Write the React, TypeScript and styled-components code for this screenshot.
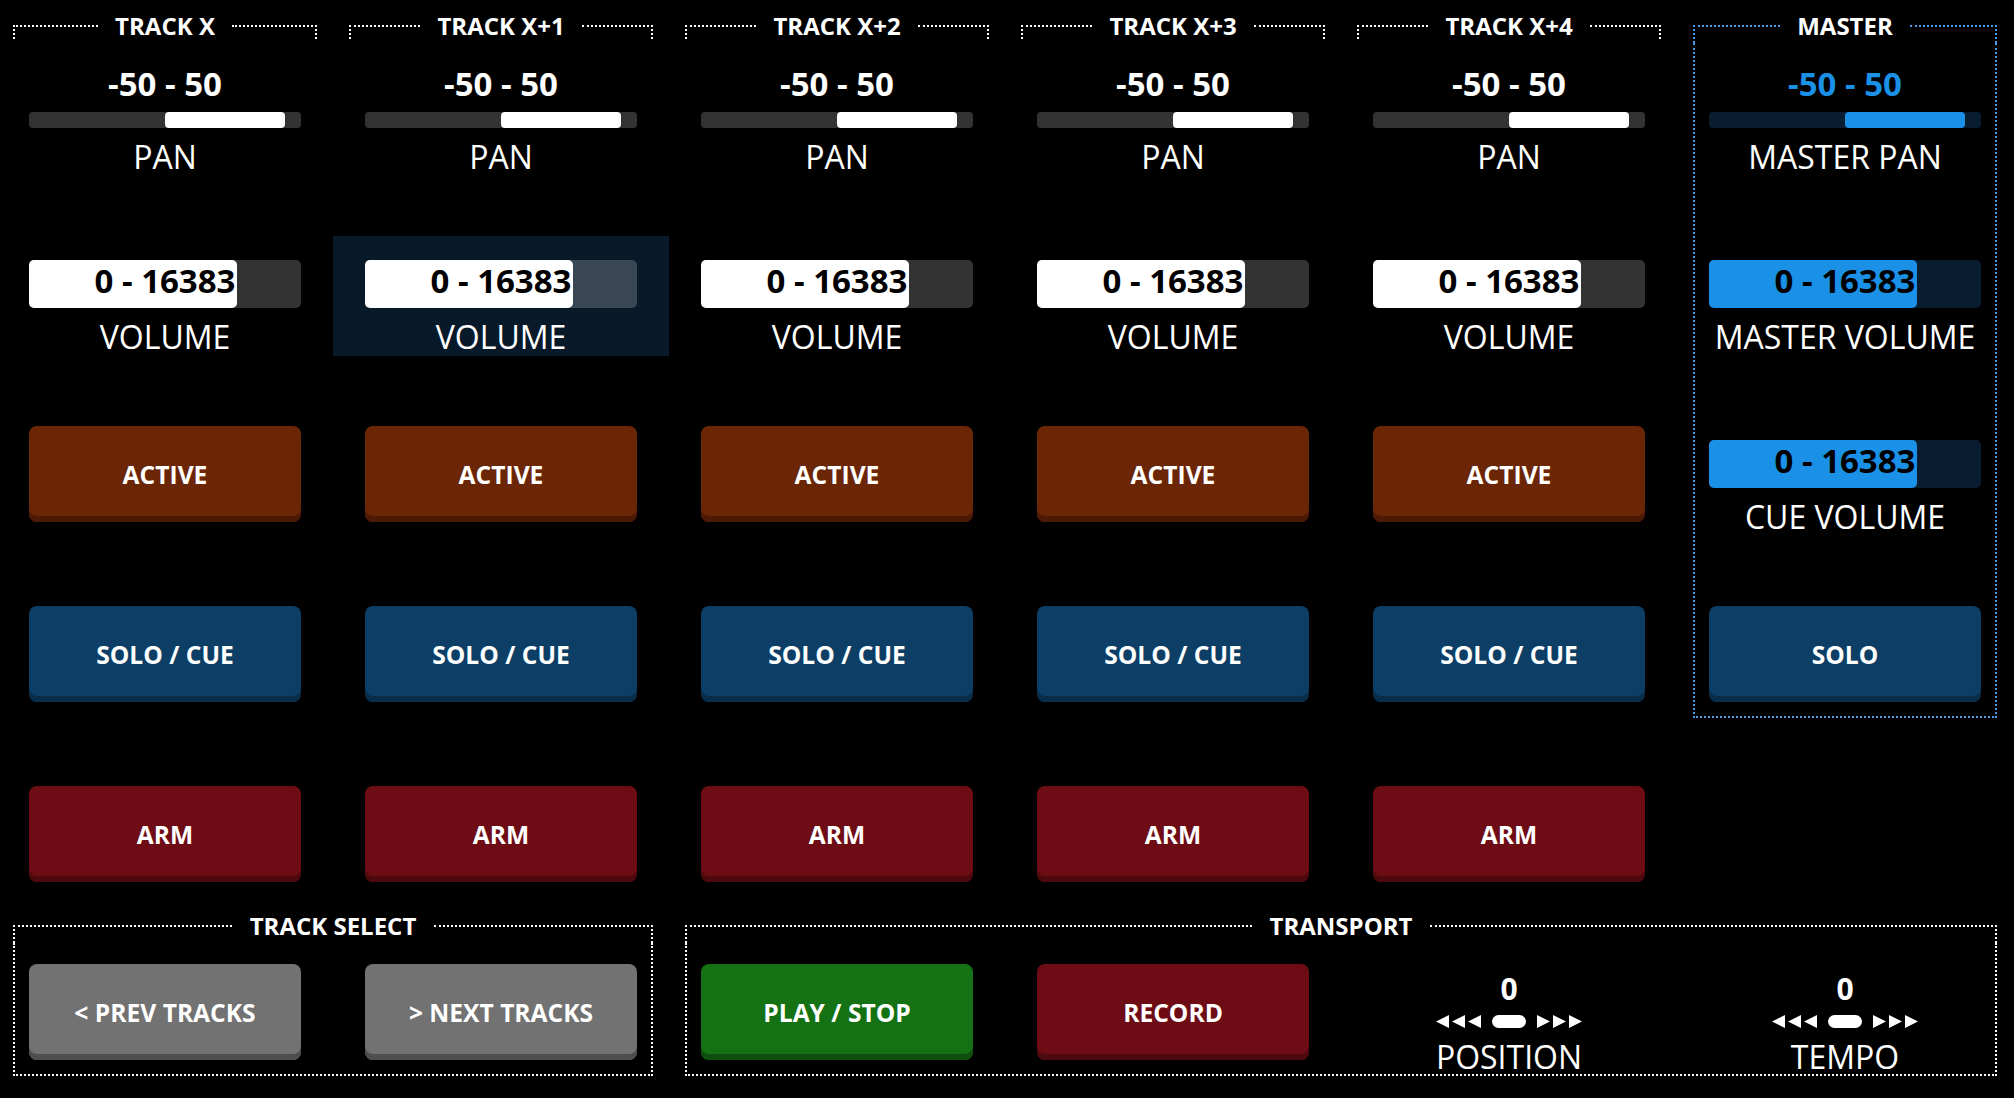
import React from 'react';
import styled, { createGlobalStyle, css } from 'styled-components';

const GlobalStyle = createGlobalStyle`
  html, body {
    margin: 0;
    padding: 0;
    background: #000;
  }
  body {
    width: 2014px;
    height: 1098px;
    overflow: hidden;
    font-family: "Open Sans", "DejaVu Sans", sans-serif;
    color: #fff;
  }
`;

const WHITE = '#ffffff';
const BLUE = '#1a90e6';
const BLUE_BORDER = '#4d9be8';

const Page = styled.div`
  width: 2016px;
  height: 1098px;
  margin-left: -3px;
  display: flex;
  flex-direction: column;
`;

const Columns = styled.div`
  display: grid;
  grid-template-columns: repeat(6, 336px);
  align-items: start;
`;

const Column = styled.div`
  display: flex;
  flex-direction: column;
`;

/* ---------- group (dotted fieldset) ---------- */

const Group = styled.div`
  margin: 0 16px;
  display: flex;
  flex-direction: column;
  color: #fff;
`;

const GroupHead = styled.div`
  display: flex;
  align-items: flex-start;
  padding-top: 9px;
`;

const HeadLine = styled.div<{ $side: 'left' | 'right'; $color: string; $closed?: boolean }>`
  flex: 1;
  margin-top: 16px;
  border-top: 2px dotted ${(p) => p.$color};
  ${(p) => (p.$side === 'left' ? `border-left: 2px dotted ${p.$color};` : `border-right: 2px dotted ${p.$color};`)}
  ${(p) => (p.$closed ? css`align-self: stretch;` : css`height: 12px;`)}
`;

const Legend = styled.div<{ $gap?: number }>`
  font-size: 24px;
  font-weight: 700;
  line-height: 34px;
  padding: 0 ${(p) => p.$gap ?? 17}px;
  white-space: nowrap;
`;

const GroupBody = styled.div<{ $color: string }>`
  border-left: 2px dotted ${(p) => p.$color};
  border-right: 2px dotted ${(p) => p.$color};
  border-bottom: 2px dotted ${(p) => p.$color};
`;

const Bleed = styled.div<{ $cols: number; $top: number }>`
  margin: 0 -18px;
  padding-top: ${(p) => p.$top}px;
  display: grid;
  grid-template-columns: repeat(${(p) => p.$cols}, 336px);
  row-gap: 60px;
`;

const Cells = styled.div<{ $top: number }>`
  display: flex;
  flex-direction: column;
  gap: 60px;
  padding-top: ${(p) => p.$top}px;
`;

/* ---------- pan ---------- */

const PanCell = styled.div`
  height: 120px;
  box-sizing: border-box;
  padding-top: 5px;
  display: flex;
  flex-direction: column;
  align-items: center;
`;

const PanValue = styled.div<{ $color: string }>`
  font-size: 33px;
  font-weight: 700;
  line-height: 45px;
  color: ${(p) => p.$color};
  white-space: nowrap;
`;

const PanTrack = styled.div<{ $bg: string }>`
  margin-top: 6px;
  width: 272px;
  height: 16px;
  border-radius: 4px;
  background: ${(p) => p.$bg};
  display: flex;
`;

const PanFill = styled.div<{ $color: string }>`
  margin-left: 136px;
  width: 120px;
  height: 16px;
  border-radius: 4px;
  background: ${(p) => p.$color};
`;

const Label = styled.div`
  margin-top: 8px;
  font-size: 32px;
  font-weight: 400;
  line-height: 41px;
  color: #fff;
  white-space: nowrap;
`;

/* ---------- volume ---------- */

const VolumeCell = styled.div<{ $highlight?: boolean }>`
  height: 120px;
  box-sizing: border-box;
  padding-top: 24px;
  display: flex;
  flex-direction: column;
  align-items: center;
  background: ${(p) => (p.$highlight ? '#08192a' : 'transparent')};
`;

const VolumeTrack = styled.div<{ $bg: string }>`
  width: 272px;
  height: 48px;
  border-radius: 5px;
  background: ${(p) => p.$bg};
  display: grid;
`;

const VolumeFill = styled.div<{ $color: string }>`
  grid-area: 1 / 1;
  justify-self: start;
  width: 208px;
  height: 48px;
  border-radius: 5px;
  background: ${(p) => p.$color};
`;

const VolumeText = styled.div`
  grid-area: 1 / 1;
  text-align: center;
  font-size: 33px;
  font-weight: 700;
  line-height: 42px;
  color: #000;
  white-space: nowrap;
`;

/* ---------- buttons ---------- */

const ButtonCell = styled.div`
  height: 120px;
  box-sizing: border-box;
  padding-top: 10px;
  display: flex;
  justify-content: center;
  align-items: flex-start;
`;

const Pad = styled.button<{ $face: string; $edge: string }>`
  width: 272px;
  height: 96px;
  border: 0;
  border-radius: 8px;
  background: ${(p) => p.$face};
  box-shadow: inset 0 -6px 0 ${(p) => p.$edge};
  color: #fff;
  font-family: "Open Sans", "DejaVu Sans", sans-serif;
  font-size: 24.6px;
  font-weight: 700;
  display: flex;
  align-items: center;
  justify-content: center;
  padding: 0;
  white-space: nowrap;
`;

/* ---------- jog ---------- */

const JogCell = styled.div`
  height: 120px;
  box-sizing: border-box;
  padding-top: 18px;
  display: flex;
  flex-direction: column;
  align-items: center;
`;

const JogValue = styled.div`
  font-size: 30px;
  font-weight: 700;
  line-height: 34px;
`;

const JogStrip = styled.svg`
  margin-top: 9px;
  display: block;
  width: 146px;
  height: 13px;
  flex: none;
`;

const JogLabel = styled(Label)``;

/* ---------- bottom ---------- */

const Bottom = styled.div`
  margin-top: 4px;
  display: grid;
  grid-template-columns: 672px 1344px;
  align-items: start;
`;

const COLORS = {
  active: { face: '#6b2606', edge: '#4a1a05' },
  solo: { face: '#0c3e66', edge: '#092c49' },
  arm: { face: '#6d0c14', edge: '#4c0a0f' },
  gray: { face: '#727272', edge: '#4e4e4e' },
  play: { face: '#147214', edge: '#0f4e0f' },
};

type PadKind = keyof typeof COLORS;

function PadButton({ kind, children }: { kind: PadKind; children: React.ReactNode }) {
  return (
    <ButtonCell>
      <Pad $face={COLORS[kind].face} $edge={COLORS[kind].edge}>
        {children}
      </Pad>
    </ButtonCell>
  );
}

function GroupHeader({ title, color, closed, gap }: { title: string; color: string; closed?: boolean; gap?: number }) {
  return (
    <GroupHead>
      <HeadLine $side="left" $color={color} $closed={closed} />
      <Legend $gap={gap}>{title}</Legend>
      <HeadLine $side="right" $color={color} $closed={closed} />
    </GroupHead>
  );
}

function Pan({ label, master }: { label: string; master?: boolean }) {
  return (
    <PanCell>
      <PanValue $color={master ? BLUE : WHITE}>-50 - 50</PanValue>
      <PanTrack $bg={master ? '#081d30' : 'rgba(255,255,255,0.2)'}>
        <PanFill $color={master ? BLUE : WHITE} />
      </PanTrack>
      <Label>{label}</Label>
    </PanCell>
  );
}

function Volume({ label, master, highlight }: { label: string; master?: boolean; highlight?: boolean }) {
  return (
    <VolumeCell $highlight={highlight}>
      <VolumeTrack $bg={master ? '#081d30' : 'rgba(255,255,255,0.2)'}>
        <VolumeFill $color={master ? BLUE : WHITE} />
        <VolumeText>0 - 16383</VolumeText>
      </VolumeTrack>
      <Label>{label}</Label>
    </VolumeCell>
  );
}

function Arrows() {
  const left = [0, 16, 32];
  const right = [101, 117, 133];
  return (
    <JogStrip viewBox="0 0 146 13">
      {left.map((x) => (
        <polygon key={x} points={`${x + 13},0 ${x + 13},13 ${x},6.5`} fill="#fff" />
      ))}
      <rect x="56" y="0" width="34" height="13" rx="6.5" fill="#fff" />
      {right.map((x) => (
        <polygon key={x} points={`${x},0 ${x},13 ${x + 13},6.5`} fill="#fff" />
      ))}
    </JogStrip>
  );
}

function Jog({ label }: { label: string }) {
  return (
    <JogCell>
      <JogValue>0</JogValue>
      <Arrows />
      <JogLabel>{label}</JogLabel>
    </JogCell>
  );
}

const TRACKS = ['TRACK X', 'TRACK X+1', 'TRACK X+2', 'TRACK X+3', 'TRACK X+4'];

export default function App() {
  return (
    <>
      <GlobalStyle />
      <Page>
        <Columns>
          {TRACKS.map((t, i) => (
            <Column key={t}>
              <Group>
                <GroupHeader title={t} color={WHITE} />
              </Group>
              <Cells $top={13}>
                <Pan label="PAN" />
                <Volume label="VOLUME" highlight={i === 1} />
                <PadButton kind="active">ACTIVE</PadButton>
                <PadButton kind="solo">SOLO / CUE</PadButton>
                <PadButton kind="arm">ARM</PadButton>
              </Cells>
            </Column>
          ))}
          <Column>
            <Group>
              <GroupHeader title="MASTER" color={BLUE_BORDER} closed />
              <GroupBody $color={BLUE_BORDER}>
                <Bleed $cols={1} $top={13}>
                  <Pan label="MASTER PAN" master />
                  <Volume label="MASTER VOLUME" master />
                  <Volume label="CUE VOLUME" master />
                  <PadButton kind="solo">SOLO</PadButton>
                </Bleed>
              </GroupBody>
            </Group>
          </Column>
        </Columns>
        <Bottom>
          <Group>
            <GroupHeader title="TRACK SELECT" color={WHITE} closed gap={18} />
            <GroupBody $color={WHITE}>
              <Bleed $cols={2} $top={11}>
                <PadButton kind="gray">&lt; PREV TRACKS</PadButton>
                <PadButton kind="gray">&gt; NEXT TRACKS</PadButton>
              </Bleed>
            </GroupBody>
          </Group>
          <Group>
            <GroupHeader title="TRANSPORT" color={WHITE} closed gap={18} />
            <GroupBody $color={WHITE}>
              <Bleed $cols={4} $top={11}>
                <PadButton kind="play">PLAY / STOP</PadButton>
                <PadButton kind="arm">RECORD</PadButton>
                <Jog label="POSITION" />
                <Jog label="TEMPO" />
              </Bleed>
            </GroupBody>
          </Group>
        </Bottom>
      </Page>
    </>
  );
}
